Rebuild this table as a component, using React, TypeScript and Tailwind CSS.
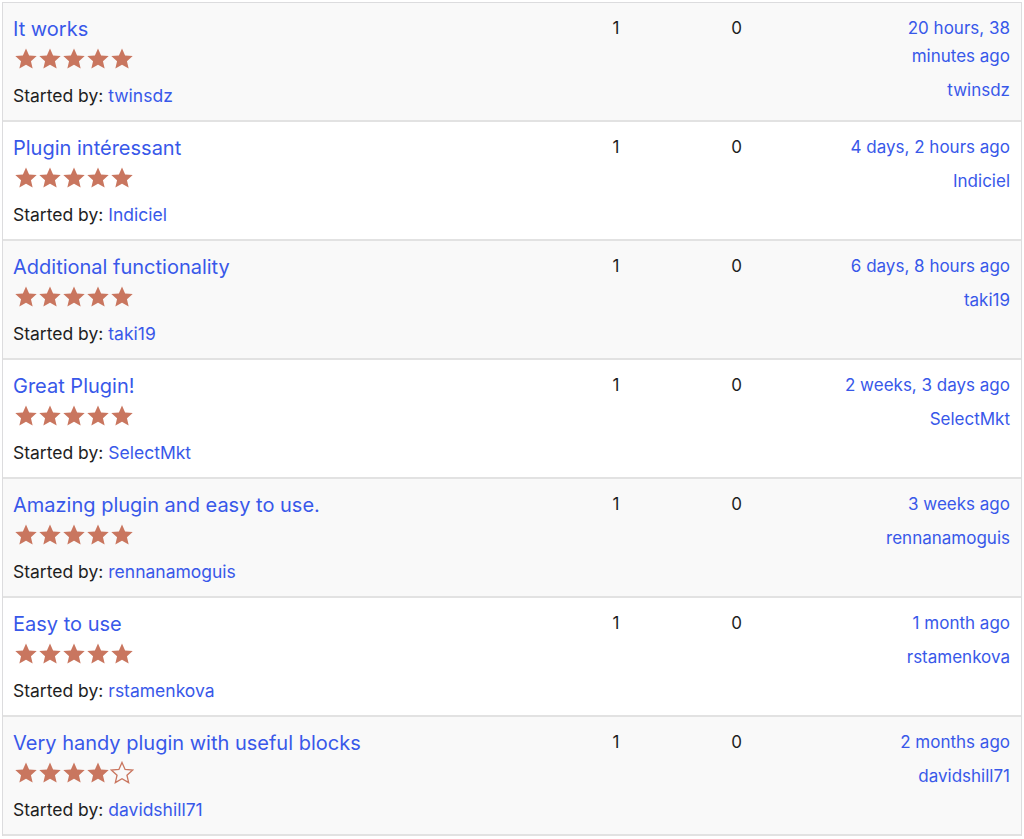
const ROWS = [
  { title: 'It works', rating: 5, author: 'twinsdz', voices: 1, replies: 0, fresh: '20 hours, 38 minutes ago' },
  { title: 'Plugin intéressant', rating: 5, author: 'Indiciel', voices: 1, replies: 0, fresh: '4 days, 2 hours ago' },
  { title: 'Additional functionality', rating: 5, author: 'taki19', voices: 1, replies: 0, fresh: '6 days, 8 hours ago' },
  { title: 'Great Plugin!', rating: 5, author: 'SelectMkt', voices: 1, replies: 0, fresh: '2 weeks, 3 days ago' },
  { title: 'Amazing plugin and easy to use.', rating: 5, author: 'rennanamoguis', voices: 1, replies: 0, fresh: '3 weeks ago' },
  { title: 'Easy to use', rating: 5, author: 'rstamenkova', voices: 1, replies: 0, fresh: '1 month ago' },
  { title: 'Very handy plugin with useful blocks', rating: 4, author: 'davidshill71', voices: 1, replies: 0, fresh: '2 months ago' },
];

const STAR = 'M12 1.4l3.1 7 7.6.7-5.75 5.05 1.7 7.45L12 17.7l-6.65 3.9 1.7-7.45L1.3 9.1l7.6-.7z';

function Star({ filled }: { filled: boolean }) {
  return (
    <svg viewBox="0 0 24 24" className="w-6 h-6 shrink-0">
      <path d={STAR} fill={filled ? '#c9765f' : 'none'} stroke="#c9765f" strokeWidth={filled ? 0 : 1.3} strokeLinejoin="miter" />
    </svg>
  );
}

export default function App() {
  return (
    <div className="bg-white w-[1024px] h-[839px] overflow-hidden pt-[2px] pl-[2px]" style={{ fontFamily: 'Inter, "Noto Sans", sans-serif' }}>
      <div className="w-[1020px] border-l border-r border-t border-[#dcdcde] text-[#1e1e1e]">
        {ROWS.map((r, i) => (
          <div key={r.title} className={`flex border-b-2 border-[#e2e2e2] ${i % 2 === 0 ? 'bg-[#f9f9f9]' : 'bg-white'}`}>
            <div className="flex-1 pl-[10px] pt-[10px] pb-[10px]">
              <a className="block text-[20px] leading-[32px] text-[#3858e9]">{r.title}</a>
              <div className="flex mt-[2px] ml-[1px] h-6">
                {[0, 1, 2, 3, 4].map(k => <Star key={k} filled={k < r.rating} />)}
              </div>
              <p className="mt-[11px] text-[17.5px] leading-[28px]">
                Started by: <a className="text-[#3858e9]">{r.author}</a>
              </p>
            </div>
            <div className="w-[120px] text-center pt-[11px] text-[17px] leading-[28px]">{r.voices}</div>
            <div className="w-[121px] text-center pt-[11px] text-[17px] leading-[28px]">{r.replies}</div>
            <div className="w-[224px] pl-[43px] pr-[11px] pt-[11px] text-right text-[17px] leading-[28px] text-[#3858e9]">
              <a className="block">{r.fresh}</a>
              <a className="block mt-[6px]">{r.author}</a>
            </div>
          </div>
        ))}
      </div>
    </div>
  );
}
